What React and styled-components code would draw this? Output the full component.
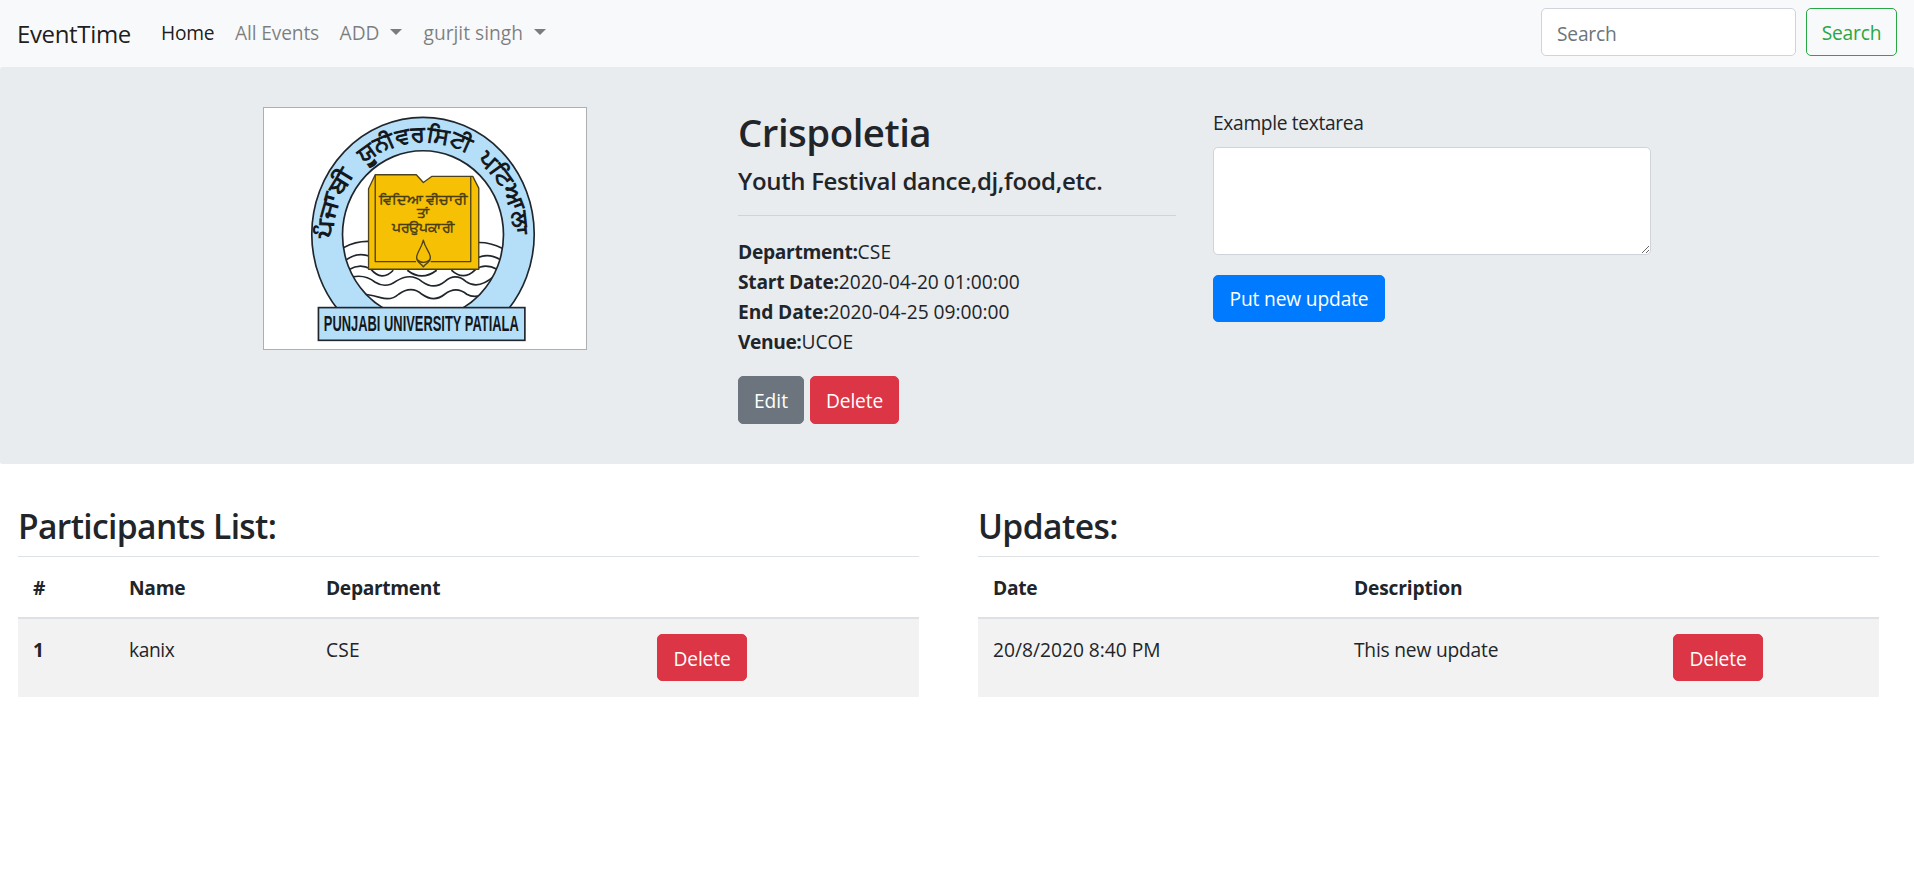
import React from "react";
import styled, { createGlobalStyle, css } from "styled-components";

const GlobalStyle = createGlobalStyle`
  *, *::before, *::after { box-sizing: border-box; }
  body {
    margin: 0;
    background: #fff;
    color: #212529;
    font-family: "Open Sans", "Noto Sans", sans-serif;
    font-size: 19.2px;
    line-height: 30px;
    overflow: hidden;
  }
`;

const tracked = css`
  letter-spacing: ${(p) => p.$track || 0}px;
`;

const Navbar = styled.nav`
  display: flex;
  align-items: flex-start;
  height: 67px;
  padding: 8px 17px 0;
  background: #f8f9fa;
`;

const Brand = styled.a`
  width: 134px;
  padding-top: 7px;
  color: rgba(0, 0, 0, 0.9);
  font-size: 24px;
  line-height: 38px;
  letter-spacing: -0.35px;
  white-space: nowrap;
`;

const NavLinks = styled.div`
  display: flex;
  flex: 1;
  padding-top: 10px;
`;

const NavLink = styled.a`
  display: flex;
  align-items: center;
  gap: 11px;
  width: ${(p) => p.$width}px;
  padding: 0 10px;
  color: ${(p) => (p.$active ? "rgba(0, 0, 0, 0.9)" : "rgba(0, 0, 0, 0.5)")};
  white-space: nowrap;
  ${tracked}
`;

const Caret = styled.span`
  margin-top: -2px;
  border-top: 6px solid;
  border-left: 6px solid transparent;
  border-right: 6px solid transparent;
`;

const SearchForm = styled.form`
  display: flex;
  gap: 10px;
`;

const SearchInput = styled.input`
  width: 255px;
  height: 48px;
  padding: 2px 15px 0;
  border: 1px solid #ced4da;
  border-radius: 5px;
  background: #fff;
  font: inherit;
  letter-spacing: -0.2px;
  &::placeholder { color: #6c757d; opacity: 1; }
`;

const tones = {
  primary: "#007bff",
  secondary: "#6c757d",
  danger: "#dc3545",
};

const Button = styled.button`
  width: ${(p) => p.$width}px;
  height: ${(p) => p.$height || 47}px;
  padding: 1px 0 0;
  border: 1px solid ${(p) => tones[p.$tone]};
  border-radius: 5px;
  background: ${(p) => tones[p.$tone]};
  color: #fff;
  font: inherit;
  text-align: center;
  white-space: nowrap;
  ${tracked}
`;

const SearchButton = styled(Button)`
  border-color: #28a745;
  background: transparent;
  color: #28a745;
`;

const RowButton = styled(Button)`
  padding-top: 2px;
`;

const Jumbotron = styled.header`
  height: 397px;
  padding: 40px 0;
  border-radius: 2px;
  background: #e9ecef;
`;

const Container = styled.div`
  display: grid;
  grid-template-columns: repeat(3, 475px);
  padding-left: 244px;
`;

const Column = styled.div`
  padding: 0 18px 0 19px;
`;

const Logo = styled.svg`
  display: block;
  width: 324px;
  height: 243px;
`;

const Title = styled.h2`
  margin: 0;
  padding: 1px 0 9px;
  font-size: 38.4px;
  font-weight: 600;
  line-height: 48px;
  letter-spacing: -0.5px;
`;

const Subtitle = styled.h5`
  margin: 0;
  padding-top: 1px;
  font-size: 24px;
  font-weight: 600;
  line-height: 30px;
  letter-spacing: -0.32px;
  white-space: nowrap;
`;

const Divider = styled.hr`
  margin: 19px 0 21px;
  border: 0;
  border-top: 1px solid rgba(0, 0, 0, 0.1);
`;

const Details = styled.dl`
  margin: 0 0 19px;
`;

const Detail = styled.div`
  display: flex;
`;

const Term = styled.dt`
  font-weight: 700;
  ${tracked}
`;

const Value = styled.dd`
  margin: 0;
  ${tracked}
`;

const Actions = styled.div`
  display: flex;
  gap: 6px;
`;

const Label = styled.label`
  display: block;
  padding: 1px 0 9px;
  letter-spacing: -0.33px;
`;

const TextArea = styled.textarea`
  display: block;
  width: 438px;
  height: 108px;
  margin-bottom: 20px;
  padding: 7px 15px;
  border: 1px solid #ced4da;
  border-radius: 5px;
  background: #fff;
  font: inherit;
`;

const Lists = styled.main`
  display: grid;
  grid-template-columns: 901px 901px;
  gap: 59px;
  padding: 40px 0 0 18px;
`;

const Heading = styled.h3`
  margin: 0;
  padding: 1px 0 9px;
  font-size: 33.6px;
  font-weight: 600;
  line-height: 42px;
  ${tracked}
`;

const Row = styled.div`
  display: grid;
  grid-template-columns: ${(p) => p.$columns};
  height: 78px;
  background: #f2f2f2;
`;

const HeadRow = styled(Row)`
  height: 63px;
  border-top: 1px solid #dee2e6;
  border-bottom: 2px solid #dee2e6;
  background: transparent;
  font-weight: 700;
`;

const Cell = styled.div`
  padding: 16px 15px;
  font-weight: ${(p) => (p.$strong ? 700 : "inherit")};
  ${tracked}
`;

const ActionCell = styled(Cell)`
  padding-top: 15px;
`;

const participantColumns = "96px 197px 331px 1fr";
const updateColumns = "361px 319px 1fr";

function UniversityLogo() {
  return (
    <Logo viewBox="40 37 970 728" preserveAspectRatio="none" role="img" aria-label="Punjabi University Patiala">
      <defs>
        <path id="logo-arc" d="M248 432 V418 A271 278 0 0 1 790 418 V440" />
        <clipPath id="logo-inside">
          <ellipse cx="519" cy="420" rx="240" ry="252" />
        </clipPath>
        <clipPath id="logo-above-banner">
          <rect x="150" y="40" width="740" height="600" />
        </clipPath>
      </defs>
      <rect x="41" y="38" width="968" height="726" fill="#fff" stroke="#adb0b2" strokeWidth="4" />
      <g clipPath="url(#logo-above-banner)">
        <g stroke="#20262c" strokeWidth="5">
          <ellipse cx="519" cy="418" rx="333" ry="350" fill="#b5dff9" />
          <ellipse cx="519" cy="420" rx="241" ry="252" fill="#fff" />
        </g>
        <g clipPath="url(#logo-inside)" fill="none" stroke="#20262c" strokeWidth="5">
          <path d="M282 458 Q320 438 360 440 M684 443 Q720 442 756 460" />
          <path d="M288 496 Q322 470 360 484 M684 488 Q716 474 750 494" />
          <path d="M298 524 Q330 504 362 522 Q396 562 430 526 M472 526 Q515 560 560 526 M604 526 Q640 560 676 524 Q704 504 742 524" />
          <path d="M308 546 Q346 538 376 562 Q408 582 440 558 Q482 532 516 560 Q552 586 584 560 Q616 532 648 560 Q684 586 732 544" />
          <path d="M346 598 Q372 602 392 608 Q424 618 446 598 Q484 570 516 598 Q552 624 584 598 Q618 572 650 598 Q670 610 696 600" />
        </g>
      </g>
      <g stroke="#4d421b" strokeWidth="4" strokeLinejoin="round">
        <path d="M356 523 V282 L376 240 H499 L520 263 L545 245 H668 L686 280 V523 Z" fill="#f6c004" />
        <path d="M376 240 V500 H498 M542 500 H662 V245" fill="none" />
        <path d="M520 436 C514 462 500 472 500 488 C500 504 512 504 520 516 C528 504 541 504 541 488 C541 472 526 462 520 436 Z" fill="none" />
        <path d="M502 495 Q520 510 540 495" fill="none" />
      </g>
      <g fill="#4a3d12" stroke="#4a3d12" strokeWidth="1.5" fontSize="38" fontWeight="400" textAnchor="middle">
        <text x="519" y="327" textLength="264" lengthAdjust="spacingAndGlyphs">ਵਿਦਿਆ ਵੀਚਾਰੀ</text>
        <text x="520" y="368" textLength="38" lengthAdjust="spacingAndGlyphs">ਤਾਂ</text>
        <text x="520" y="411" textLength="188" lengthAdjust="spacingAndGlyphs">ਪਰਉਪਕਾਰੀ</text>
      </g>
      <g fill="#11161b" stroke="#11161b" strokeWidth="3" fontSize="66" fontWeight="400">
        <text>
          <textPath href="#logo-arc" startOffset="2" textLength="208" lengthAdjust="spacingAndGlyphs">ਪੰਜਾਬੀ</textPath>
        </text>
        <text>
          <textPath href="#logo-arc" startOffset="252" textLength="335" lengthAdjust="spacingAndGlyphs">ਯੂਨੀਵਰਸਿਟੀ</textPath>
        </text>
        <text>
          <textPath href="#logo-arc" startOffset="622" textLength="256" lengthAdjust="spacingAndGlyphs">ਪਟਿਆਲਾ</textPath>
        </text>
      </g>
      <rect x="206" y="638" width="618" height="98" fill="#b5dff9" stroke="#20262c" strokeWidth="5" />
      <text
        transform="translate(222 709) scale(0.6 1)"
        fill="#14181d"
        fontFamily="Liberation Sans"
        fontSize="64"
        fontWeight="700"
        textLength="973"
        lengthAdjust="spacingAndGlyphs"
      >
        PUNJABI UNIVERSITY PATIALA
      </text>
    </Logo>
  );
}

export default function App() {
  return (
    <>
      <GlobalStyle />
      <Navbar>
        <Brand>EventTime</Brand>
        <NavLinks>
          <NavLink $width={74} $track={-0.2} $active>Home</NavLink>
          <NavLink $width={104.5} $track={-0.15}>All Events</NavLink>
          <NavLink $width={84}>ADD<Caret /></NavLink>
          <NavLink $width={150}>gurjit singh<Caret /></NavLink>
        </NavLinks>
        <SearchForm>
          <SearchInput placeholder="Search" />
          <SearchButton type="button" $width={91} $height={48} $track={-0.2}>Search</SearchButton>
        </SearchForm>
      </Navbar>

      <Jumbotron>
        <Container>
          <Column>
            <UniversityLogo />
          </Column>
          <Column>
            <Title>Crispoletia</Title>
            <Subtitle>Youth Festival dance,dj,food,etc.</Subtitle>
            <Divider />
            <Details>
              <Detail><Term $track={-0.3}>Department:</Term><Value $track={0.1}>CSE</Value></Detail>
              <Detail><Term $track={-0.25}>Start Date:</Term><Value>2020-04-20 01:00:00</Value></Detail>
              <Detail><Term $track={-0.1}>End Date:</Term><Value>2020-04-25 09:00:00</Value></Detail>
              <Detail><Term $track={-0.4}>Venue:</Term><Value>UCOE</Value></Detail>
            </Details>
            <Actions>
              <Button $tone="secondary" $width={66} $height={48}>Edit</Button>
              <Button $tone="danger" $width={89} $height={48} $track={-0.15}>Delete</Button>
            </Actions>
          </Column>
          <Column>
            <Label htmlFor="update">Example textarea</Label>
            <TextArea id="update" />
            <Button $tone="primary" $width={172} $track={-0.15}>Put new update</Button>
          </Column>
        </Container>
      </Jumbotron>

      <Lists>
        <section>
          <Heading $track={-0.64}>Participants List:</Heading>
          <HeadRow $columns={participantColumns}>
            <Cell>#</Cell>
            <Cell $track={-0.25}>Name</Cell>
            <Cell $track={-0.33}>Department</Cell>
          </HeadRow>
          <Row $columns={participantColumns}>
            <Cell $strong>1</Cell>
            <Cell $track={-0.4}>kanix</Cell>
            <Cell $track={0.2}>CSE</Cell>
            <ActionCell><RowButton $tone="danger" $width={90} $track={-0.15}>Delete</RowButton></ActionCell>
          </Row>
        </section>
        <section>
          <Heading $track={-0.57}>Updates:</Heading>
          <HeadRow $columns={updateColumns}>
            <Cell $track={-0.3}>Date</Cell>
            <Cell $track={-0.18}>Description</Cell>
          </HeadRow>
          <Row $columns={updateColumns}>
            <Cell>20/8/2020 8:40 PM</Cell>
            <Cell $track={-0.2}>This new update</Cell>
            <ActionCell><RowButton $tone="danger" $width={90} $track={-0.15}>Delete</RowButton></ActionCell>
          </Row>
        </section>
      </Lists>
    </>
  );
}
